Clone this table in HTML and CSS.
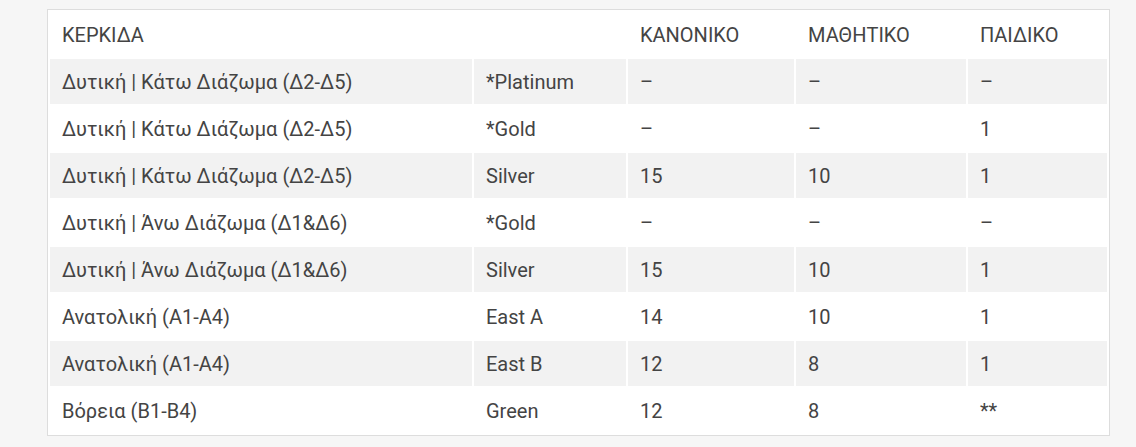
FILE: index.html
```html
<!DOCTYPE html>
<html lang="el">
<head>
<meta charset="utf-8">
<title>Κερκίδες</title>
<link rel="stylesheet" href="styles.css">
</head>
<body>
<div class="wrap">
<table class="prices">
<colgroup>
<col class="c1"><col class="c2"><col class="c3"><col class="c4"><col class="c5">
</colgroup>
<thead>
<tr><th>ΚΕΡΚΙΔΑ</th><th></th><th>ΚΑΝΟΝΙΚΟ</th><th>ΜΑΘΗΤΙΚΟ</th><th>ΠΑΙΔΙΚΟ</th></tr>
</thead>
<tbody>
<tr><td>Δυτική | Κάτω Διάζωμα (Δ2-Δ5)</td><td>*Platinum</td><td>–</td><td>–</td><td>–</td></tr>
<tr><td>Δυτική | Κάτω Διάζωμα (Δ2-Δ5)</td><td>*Gold</td><td>–</td><td>–</td><td>1</td></tr>
<tr><td>Δυτική | Κάτω Διάζωμα (Δ2-Δ5)</td><td>Silver</td><td>15</td><td>10</td><td>1</td></tr>
<tr><td>Δυτική | Άνω Διάζωμα (Δ1&amp;Δ6)</td><td>*Gold</td><td>–</td><td>–</td><td>–</td></tr>
<tr><td>Δυτική | Άνω Διάζωμα (Δ1&amp;Δ6)</td><td>Silver</td><td>15</td><td>10</td><td>1</td></tr>
<tr><td>Ανατολική (Α1-Α4)</td><td>East A</td><td>14</td><td>10</td><td>1</td></tr>
<tr><td>Ανατολική (Α1-Α4)</td><td>East B</td><td>12</td><td>8</td><td>1</td></tr>
<tr><td>Βόρεια (Β1-Β4)</td><td>Green</td><td>12</td><td>8</td><td>**</td></tr>
</tbody>
</table>
</div>
</body>
</html>
```
FILE: styles.css
```css
html, body {
  margin: 0;
  padding: 0;
  background: #f6f6f6;
}
body {
  font-family: Roboto, "Noto Sans", sans-serif;
  color: #444444;
}
.wrap {
  padding: 9px 0 0 47px;
}
.prices {
  table-layout: fixed;
  width: 1063px;
  border: 1px solid #dddddd;
  border-collapse: separate;
  border-spacing: 2px;
  background: #ffffff;
}
.c1 { width: 422px; }
.c2 { width: 152px; }
.c3 { width: 166px; }
.c4 { width: 170px; }
.c5 { width: 139px; }
.prices th,
.prices td {
  box-sizing: border-box;
  height: 45px;
  padding: 0 12px;
  font-size: 20px;
  font-weight: 400;
  text-align: left;
  vertical-align: middle;
  white-space: nowrap;
  color: #444444;
}
.prices tbody tr:nth-child(odd) td {
  background: #f2f2f2;
}
```
